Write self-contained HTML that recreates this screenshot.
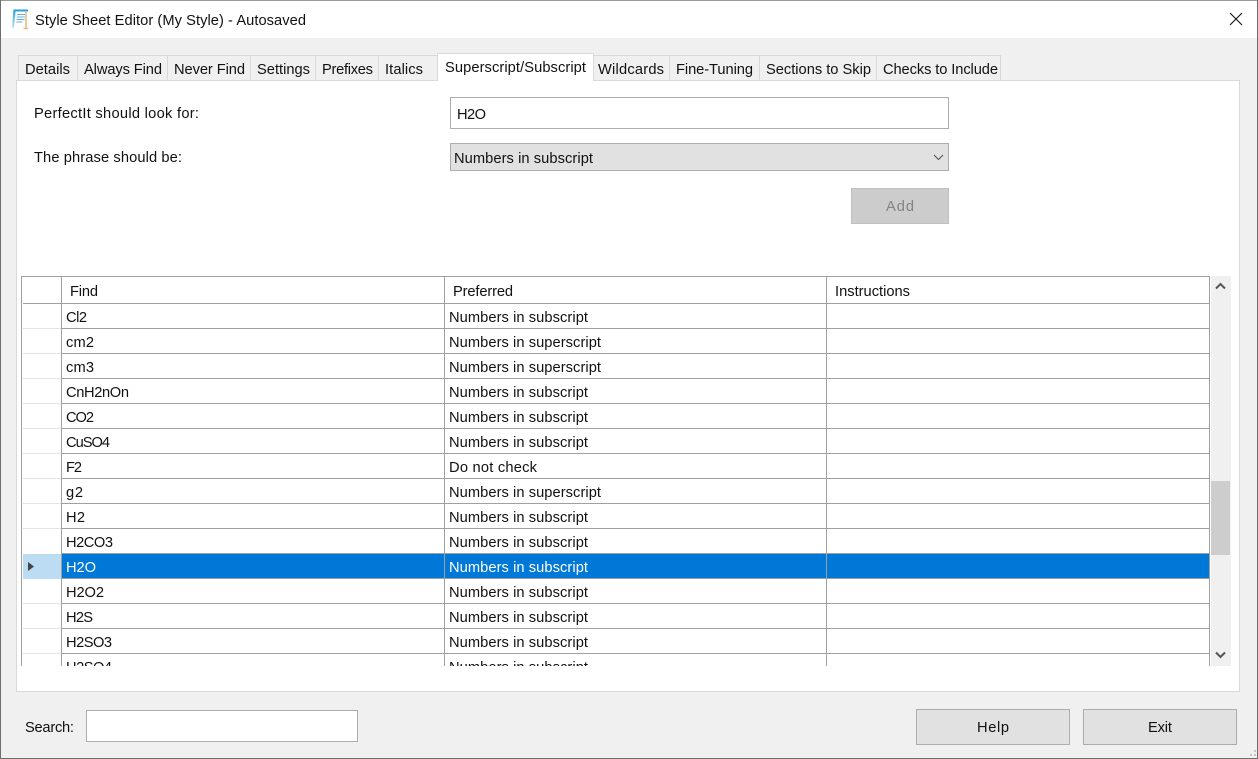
<!DOCTYPE html>
<html><head><meta charset="utf-8"><style>
html,body{margin:0;padding:0;background:#fff;overflow:hidden}
svg{display:block}
text{font-family:"Liberation Sans",sans-serif;font-size:14.67px;fill:#111;white-space:pre}
.c{shape-rendering:crispEdges}
</style></head><body>
<svg width="1258" height="759" viewBox="0 0 1258 759" xmlns="http://www.w3.org/2000/svg">
<defs>
<linearGradient id="ib" x1="0" y1="0" x2="0" y2="1"><stop offset="0" stop-color="#1f9be0"/><stop offset="1" stop-color="#bfe6fa"/></linearGradient>
</defs>
<g class="c">
<rect width="1258" height="759" fill="#f0f0f0"/>
<rect width="1258" height="38" fill="#fff"/>
<rect width="1258" height="1" fill="#9a9a9a"/>
<rect width="1" height="759" fill="#6e6e6e"/>
<rect x="1257" width="1" height="759" fill="#6e6e6e"/>
<rect y="758" width="1258" height="1" fill="#6e6e6e"/>
<!-- tabs -->
<rect x="18" y="55" width="983" height="26" fill="#f0f0f0"/>
<rect x="18" y="55" width="983" height="1" fill="#d9d9d9"/>
<rect x="18" y="55" width="1" height="26" fill="#d9d9d9"/>
<rect x="77" y="55" width="1" height="26" fill="#d9d9d9"/>
<rect x="167" y="55" width="1" height="26" fill="#d9d9d9"/>
<rect x="250" y="55" width="1" height="26" fill="#d9d9d9"/>
<rect x="315" y="55" width="1" height="26" fill="#d9d9d9"/>
<rect x="378" y="55" width="1" height="26" fill="#d9d9d9"/>
<rect x="669" y="55" width="1" height="26" fill="#d9d9d9"/>
<rect x="759" y="55" width="1" height="26" fill="#d9d9d9"/>
<rect x="876" y="55" width="1" height="26" fill="#d9d9d9"/>
<rect x="1000" y="55" width="1" height="26" fill="#d9d9d9"/>
<!-- panel -->
<rect x="16" y="80" width="1224" height="612" fill="#d9d9d9"/>
<rect x="17" y="81" width="1222" height="610" fill="#fff"/>
<!-- active tab -->
<rect x="437" y="53" width="157" height="28" fill="#d9d9d9"/>
<rect x="438" y="54" width="155" height="27" fill="#fff"/>
<!-- form -->
<rect x="450" y="97" width="499" height="32" fill="#adadad"/>
<rect x="451" y="98" width="497" height="30" fill="#fff"/>
<rect x="450" y="143" width="499" height="28" fill="#adadad"/>
<rect x="451" y="144" width="497" height="26" fill="#e1e1e1"/>
<rect x="851" y="188" width="98" height="36" fill="#bfbfbf"/>
<rect x="852" y="189" width="96" height="34" fill="#cccccc"/>
<!-- grid -->
<rect x="23" y="554" width="38" height="25" fill="#bcdcf4"/>
<rect x="62" y="554" width="1147" height="24" fill="#0078d7"/>
<rect x="21" y="276" width="1189" height="1" fill="#a0a0a0"/>
<rect x="21" y="276" width="1" height="390" fill="#a0a0a0"/>
<rect x="1209" y="276" width="1" height="390" fill="#a0a0a0"/>
<rect x="61" y="276" width="1" height="390" fill="#a0a0a0"/>
<rect x="444" y="276" width="1" height="390" fill="#a0a0a0"/>
<rect x="826" y="276" width="1" height="390" fill="#a0a0a0"/>
<rect x="23" y="303" width="1186" height="1" fill="#a0a0a0"/>
<path fill="#a0a0a0" d="M62 328h1147v1H62zM62 353h1147v1H62zM62 378h1147v1H62zM62 403h1147v1H62zM62 428h1147v1H62zM62 453h1147v1H62zM62 478h1147v1H62zM62 503h1147v1H62zM62 528h1147v1H62zM62 553h1147v1H62zM62 578h1147v1H62zM62 603h1147v1H62zM62 628h1147v1H62zM62 653h1147v1H62z"/>
<path fill="#e4e4e4" d="M23 328h38v1H23zM23 353h38v1H23zM23 378h38v1H23zM23 403h38v1H23zM23 428h38v1H23zM23 453h38v1H23zM23 478h38v1H23zM23 503h38v1H23zM23 528h38v1H23zM23 603h38v1H23zM23 628h38v1H23zM23 653h38v1H23z"/>
<!-- scrollbar -->
<rect x="1211" y="276" width="20" height="390" fill="#f0f0f0"/>
<rect x="1211" y="481" width="19" height="74" fill="#cdcdcd"/>
<!-- search & buttons -->
<rect x="86" y="710" width="272" height="32" fill="#adadad"/>
<rect x="87" y="711" width="270" height="30" fill="#fff"/>
<rect x="916" y="709" width="154" height="36" fill="#adadad"/>
<rect x="917" y="710" width="152" height="34" fill="#e1e1e1"/>
<rect x="1083" y="709" width="154" height="36" fill="#adadad"/>
<rect x="1084" y="710" width="152" height="34" fill="#e1e1e1"/>
<!-- grip -->
<path fill="#c4c4c4" d="M1254 750h2v2h-2zM1254 754h2v2h-2zM1250 754h2v2h-2z"/>
</g>
<!-- icons -->
<g>
<path d="M13.500 9.500h14.500v2h-12.500l-1.500 16.500h-2z" fill="url(#ib)"/>
<path d="M16 12h9.500v11.500l-2 3H14.800z" fill="#fff"/>
<path d="M17 14.500h8M16.800 17h8M16.500 19.500h8M16.300 22h6" stroke="#62aee0" stroke-width="1" fill="none"/>
<path d="M26 12v16.500M23.500 28.500h4.500" stroke="#e8b67a" stroke-width="1.500" fill="none"/>
<path d="M1230 13l12 12M1242 13l-12 12" stroke="#111" stroke-width="1.100" fill="none"/>
<path d="M934 155l4.500 4.500 4.500-4.500" stroke="#555" stroke-width="1.100" fill="none"/>
<path d="M1216 288.500l4.500-4.500 4.500 4.500" stroke="#555" stroke-width="2" fill="none"/>
<path d="M1216 652.500l4.500 4.500 4.500-4.500" stroke="#555" stroke-width="2" fill="none"/>
<path d="M28 562l6 4.500-6 4.500z" fill="#444"/>
</g>
<!-- title and tabs -->
<text x="35" y="25" textLength="271">Style Sheet Editor (My Style) - Autosaved</text>
<text x="25" y="74" textLength="45">Details</text>
<text x="84" y="74" textLength="78">Always Find</text>
<text x="174" y="74" textLength="71">Never Find</text>
<text x="257" y="74" textLength="53">Settings</text>
<text x="322" y="74" textLength="51">Prefixes</text>
<text x="385" y="74" textLength="38">Italics</text>
<text x="445" y="72" textLength="141">Superscript/Subscript</text>
<text x="598" y="74" textLength="66">Wildcards</text>
<text x="676" y="74" textLength="77">Fine-Tuning</text>
<text x="766" y="74" textLength="105">Sections to Skip</text>
<text x="883" y="74" textLength="115">Checks to Include</text>
<!-- form text -->
<text x="34" y="118" textLength="165">PerfectIt should look for:</text>
<text x="34" y="162" textLength="148">The phrase should be:</text>
<text x="457" y="119" textLength="29">H2O</text>
<text x="454" y="163" textLength="139">Numbers in subscript</text>
<text x="886" y="211" textLength="28" style="fill:#838383">Add</text>
<!-- header -->
<text x="70" y="296" textLength="28">Find</text>
<text x="453" y="296" textLength="60">Preferred</text>
<text x="835" y="296" textLength="75">Instructions</text>
<!-- col 1 -->
<text x="66" y="322" textLength="21">Cl2</text>
<text x="66" y="347" textLength="28">cm2</text>
<text x="66" y="372" textLength="28">cm3</text>
<text x="66" y="397" textLength="63">CnH2nOn</text>
<text x="66" y="422" textLength="28">CO2</text>
<text x="66" y="447" textLength="44">CuSO4</text>
<text x="66" y="472" textLength="16">F2</text>
<text x="66" y="497" textLength="17">g2</text>
<text x="66" y="522" textLength="19">H2</text>
<text x="66" y="547" textLength="47">H2CO3</text>
<text x="66" y="572" textLength="30" style="fill:#fff">H2O</text>
<text x="66" y="597" textLength="38">H2O2</text>
<text x="66" y="622" textLength="27">H2S</text>
<text x="66" y="647" textLength="46">H2SO3</text>
<!-- col 2 -->
<text x="449" y="322" textLength="139">Numbers in subscript</text>
<text x="449" y="347" textLength="152">Numbers in superscript</text>
<text x="449" y="372" textLength="152">Numbers in superscript</text>
<text x="449" y="397" textLength="139">Numbers in subscript</text>
<text x="449" y="422" textLength="139">Numbers in subscript</text>
<text x="449" y="447" textLength="139">Numbers in subscript</text>
<text x="449" y="472" textLength="88">Do not check</text>
<text x="449" y="497" textLength="152">Numbers in superscript</text>
<text x="449" y="522" textLength="139">Numbers in subscript</text>
<text x="449" y="547" textLength="139">Numbers in subscript</text>
<text x="449" y="572" textLength="139" style="fill:#fff">Numbers in subscript</text>
<text x="449" y="597" textLength="139">Numbers in subscript</text>
<text x="449" y="622" textLength="139">Numbers in subscript</text>
<text x="449" y="647" textLength="139">Numbers in subscript</text>
<!-- clipped last row -->
<svg x="0" y="654" width="1258" height="12" viewBox="0 654 1258 12">
<text x="66" y="672" textLength="46">H2SO4</text>
<text x="449" y="672" textLength="139">Numbers in subscript</text>
</svg>
<!-- footer -->
<text x="25" y="732" textLength="49">Search:</text>
<text x="977" y="732" textLength="32">Help</text>
<text x="1148" y="732" textLength="24">Exit</text>
</svg>
</body></html>
